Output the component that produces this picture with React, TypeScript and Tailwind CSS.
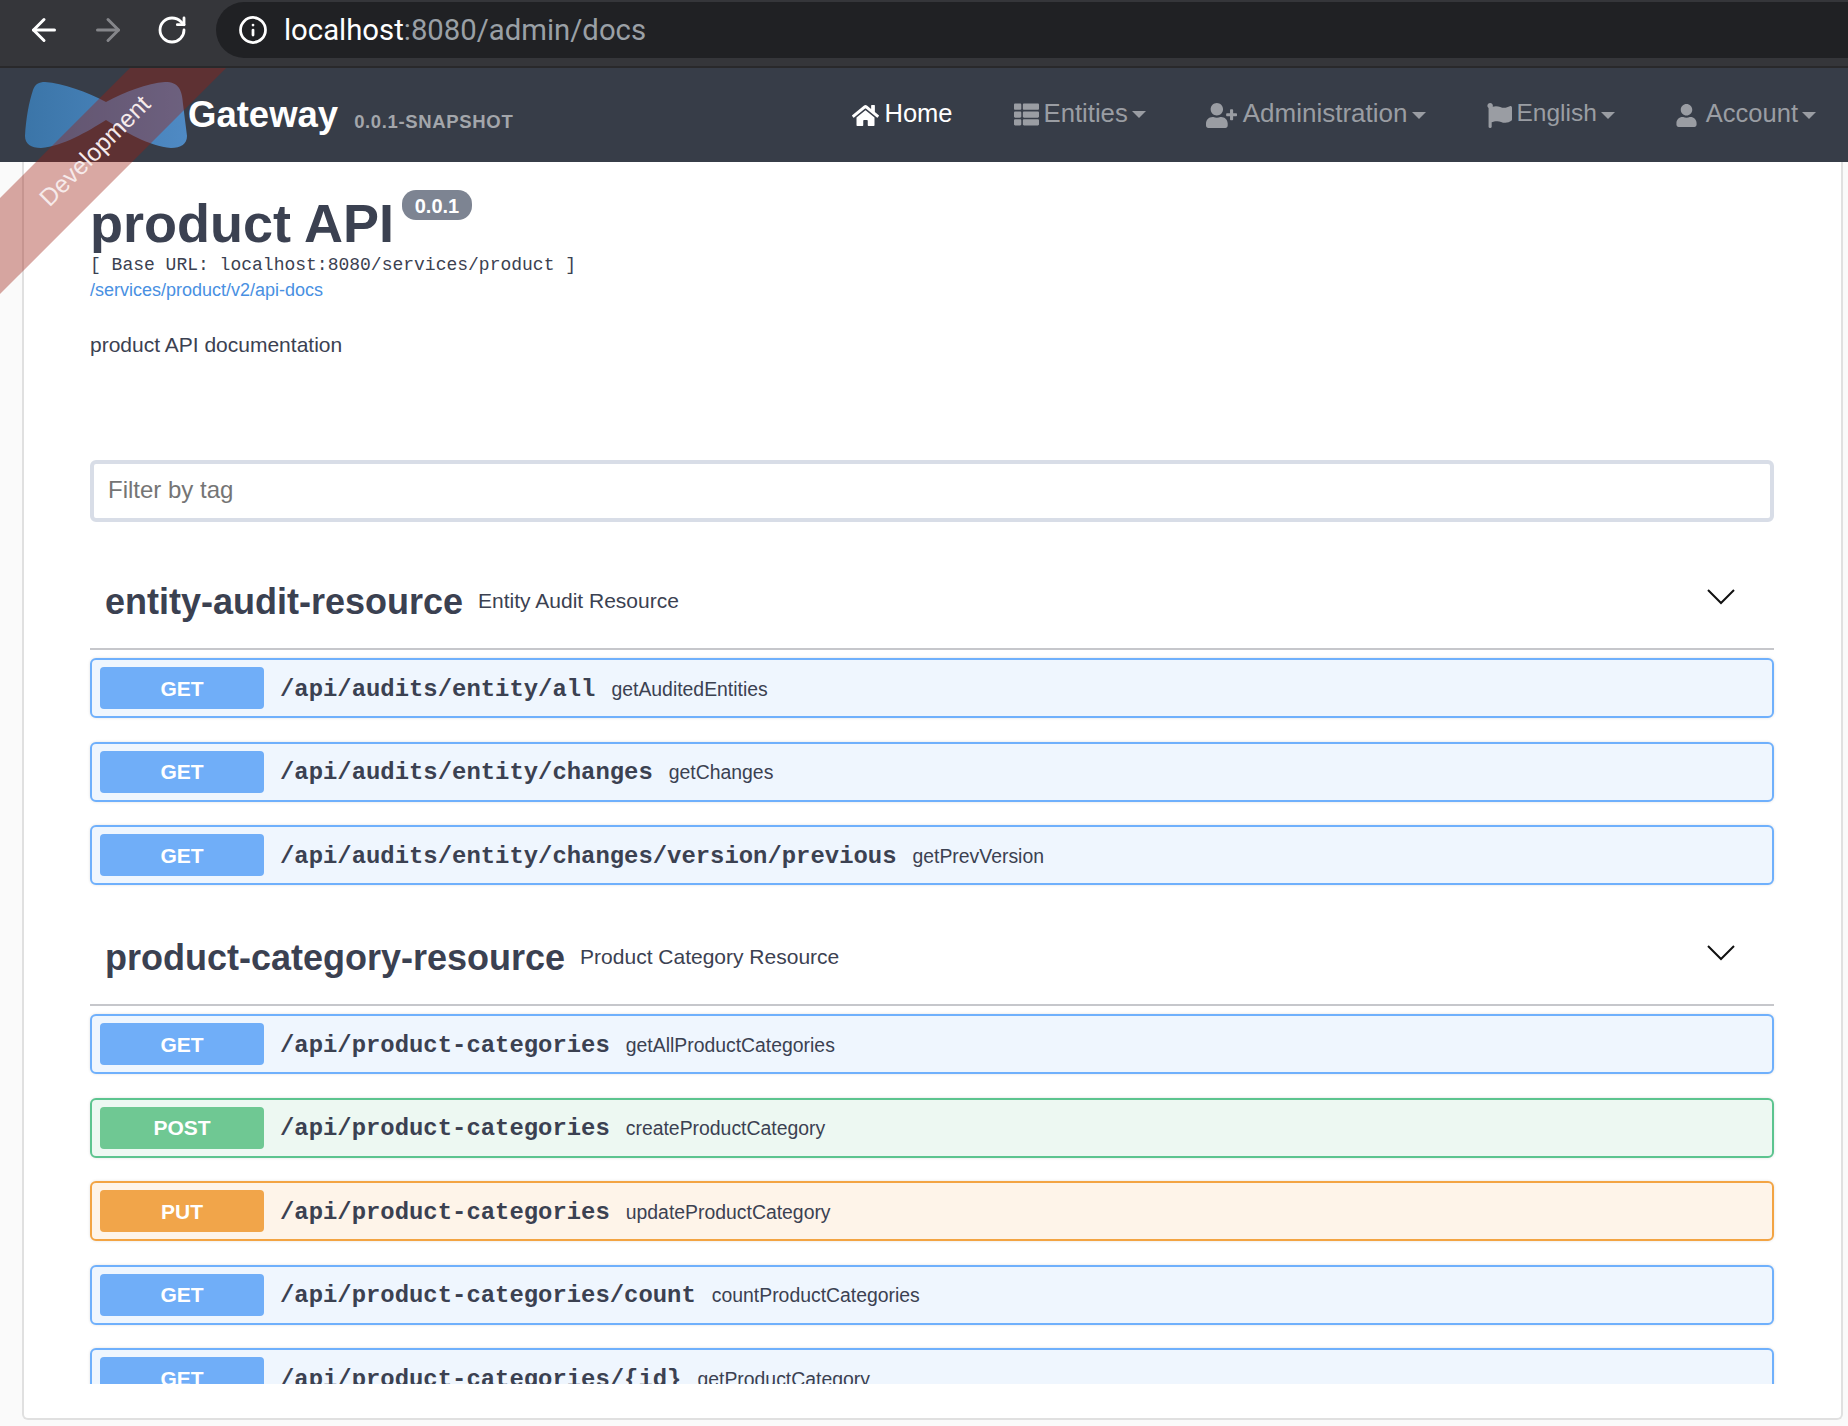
import React from 'react';
import { ArrowLeft, ArrowRight, RotateCw, Info } from 'lucide-react';
import { FaHome, FaThList, FaUserPlus, FaFlag, FaUser } from 'react-icons/fa';

type Method = 'GET' | 'POST' | 'PUT';

interface Op {
  method: Method;
  path: string;
  summary: string;
}

const entityOps: Op[] = [
  { method: 'GET', path: '/api/audits/entity/all', summary: 'getAuditedEntities' },
  { method: 'GET', path: '/api/audits/entity/changes', summary: 'getChanges' },
  { method: 'GET', path: '/api/audits/entity/changes/version/previous', summary: 'getPrevVersion' },
];

const categoryOps: Op[] = [
  { method: 'GET', path: '/api/product-categories', summary: 'getAllProductCategories' },
  { method: 'POST', path: '/api/product-categories', summary: 'createProductCategory' },
  { method: 'PUT', path: '/api/product-categories', summary: 'updateProductCategory' },
  { method: 'GET', path: '/api/product-categories/count', summary: 'countProductCategories' },
  { method: 'GET', path: '/api/product-categories/{id}', summary: 'getProductCategory' },
];

const opStyles: Record<Method, { box: string; badge: string }> = {
  GET: { box: 'border-[#6fb0fc] bg-[#eff6fe]', badge: 'bg-[#70aef8]' },
  POST: { box: 'border-[#5cc48f] bg-[#edf8f2]', badge: 'bg-[#6fc893]' },
  PUT: { box: 'border-[#f3a443] bg-[#fef4e9]', badge: 'bg-[#f1a54a]' },
};

function OpRow({ op }: { op: Op }) {
  const s = opStyles[op.method];
  return (
    <div className={`flex h-[60px] shrink-0 items-center rounded-[6px] border-2 pl-[8px] shadow-[0_0_3px_rgba(0,0,0,0.12)] ${s.box}`}>
      <div className={`flex h-[42px] w-[164px] items-center justify-center rounded-[4px] pt-[1px] text-[21px] font-bold text-white ${s.badge}`}>
        {op.method}
      </div>
      <span className="ml-[16px] mt-[3px] font-['Liberation_Mono',monospace] text-[23.9px] font-bold text-[#3b4151]">{op.path}</span>
      <span className="ml-[16px] mt-[3px] text-[19.4px] text-[#3b4151]">{op.summary}</span>
    </div>
  );
}

function TagSection({ name, desc, ops, topGap }: { name: string; desc: string; ops: Op[]; topGap: string }) {
  return (
    <section className={topGap}>
      <div className="flex h-[96px] items-center border-b-2 border-[#c6c7cb] pl-[15px] pr-[39px]">
        <h3 className="mt-[2px] text-[36px] font-bold text-[#3b4151]">{name}</h3>
        <span className="ml-[15px] text-[21px] text-[#3b4151]">{desc}</span>
        <svg className="ml-auto -mt-[8px]" width="28" height="16" viewBox="0 0 28 16" fill="none" stroke="#111" strokeWidth="2">
          <polyline points="1,1 14,14 27,1" />
        </svg>
      </div>
      <div className="mt-[8px] flex flex-col gap-[23.5px]">
        {ops.map((op, i) => (
          <OpRow key={i} op={op} />
        ))}
      </div>
    </section>
  );
}

function NavItem({ icon, label, text, active, caret = true }: { icon: React.ReactNode; label: string; text: string; active?: boolean; caret?: boolean }) {
  return (
    <div className={`flex items-center ${active ? 'text-white' : 'text-[#9a9da3]'}`}>
      {icon}
      <span className={`-mt-[3px] ${text}`}>{label}</span>
      {caret && <span className="ml-[4px] h-0 w-0 border-x-[7px] border-t-[7px] border-x-transparent border-t-[#9a9da3]" />}
    </div>
  );
}

export default function App() {
  return (
    <div className="relative flex h-[1426px] w-[1848px] flex-col overflow-hidden bg-[#fafafa] font-['Liberation_Sans',sans-serif]">
      {/* barra do navegador */}
      <div className="flex h-[68px] shrink-0 border-b-2 border-[#29292b] bg-[#35363a]">
        <div className="flex h-[66px] w-[216px] items-center pb-[6px] pl-[26px]">
          <ArrowLeft size={36} strokeWidth={2} className="text-white" />
          <ArrowRight size={36} strokeWidth={2} className="ml-[28px] text-[#85868a]" />
          <RotateCw size={32} strokeWidth={2.1} className="ml-[30px] text-white" />
        </div>
        <div className="mt-[2px] flex h-[56px] flex-1 items-center rounded-l-[28px] bg-[#202124] pl-[22px]">
          <Info size={30} strokeWidth={2.2} className="text-white" />
          <span className="ml-[16px] mt-[2px] font-['Roboto',sans-serif] text-[29.3px] text-white">
            localhost<span className="text-[#9aa0a6]">:8080/admin/docs</span>
          </span>
        </div>
      </div>

      {/* navbar */}
      <div className="flex h-[94px] shrink-0 items-center bg-[#373d48] pl-[25px]">
        <svg width="162" height="66" viewBox="0 0 162 66">
          <defs>
            <linearGradient id="bow" x1="0" y1="0" x2="1" y2="0">
              <stop offset="0" stopColor="#3b75a8" />
              <stop offset="1" stopColor="#4f8ac4" />
            </linearGradient>
          </defs>
          <path
            d="M20 0 C38 1 62 10 81 20 C100 10 122 1 140 0 C154 0 157 8 158 22 L162 54 C162 62 156 66 146 66 C124 64 100 50 81 38 C62 50 38 64 16 66 C6 66 0 62 0 54 C1 36 4 20 8 8 C10 2 14 0 20 0 Z"
            fill="url(#bow)"
          />
        </svg>
        <span className="ml-[1px] mt-[1px] text-[36.5px] font-bold text-white">Gateway</span>
        <span className="ml-[16px] mt-[14px] text-[18.5px] font-bold tracking-[0.65px] text-[#a3a6ab]">0.0.1-SNAPSHOT</span>
        <div className="ml-auto flex items-center pr-[32px]">
          <NavItem active caret={false} text="ml-[5px] text-[25.5px]" icon={<FaHome size={27} />} label="Home" />
          <div className="ml-[61px]">
            <NavItem text="ml-[5px] text-[25.7px]" icon={<FaThList size={25} />} label="Entities" />
          </div>
          <div className="ml-[60px]">
            <NavItem text="ml-[6px] text-[26px]" icon={<FaUserPlus size={31} />} label="Administration" />
          </div>
          <div className="ml-[61px]">
            <NavItem text="ml-[5px] text-[24.5px]" icon={<FaFlag size={25} />} label="English" />
          </div>
          <div className="ml-[60px]">
            <NavItem text="ml-[8px] text-[25.5px]" icon={<FaUser size={23} />} label="Account" />
          </div>
        </div>
      </div>

      {/* cartão principal */}
      <div className="ml-[22px] h-[1258px] w-[1821px] shrink-0 rounded-b-[6px] border-x-2 border-b-2 border-[#e0e0e0] bg-white">
        <div className="h-[1222px] overflow-hidden pl-[66px] pr-[67px] text-[#3b4151]">
          <div className="flex pt-[31px]">
            <h2 className="text-[54px] font-bold leading-[60px]">product API</h2>
            <span className="ml-[8px] -mt-[3px] flex h-[30px] w-[70px] items-center justify-center rounded-[14px] bg-[#7d8492] pt-[2px] text-[20px] font-bold text-white">
              0.0.1
            </span>
          </div>
          <p className="mt-[1px] font-['Liberation_Mono',monospace] text-[18px] leading-[22px]">[ Base URL: localhost:8080/services/product ]</p>
          <p className="mt-[3px] text-[18px] leading-[22px] text-[#4990e2]">/services/product/v2/api-docs</p>
          <p className="mt-[32px] text-[21px] leading-[24px]">product API documentation</p>

          <div className="mt-[103px] flex h-[62px] items-center rounded-[6px] border-4 border-[#d8dde7] pb-[2px] pl-[14px] text-[24px] text-[#757575]">
            Filter by tag
          </div>

          <TagSection topGap="mt-[32px]" name="entity-audit-resource" desc="Entity Audit Resource" ops={entityOps} />
          <TagSection topGap="mt-[25px]" name="product-category-resource" desc="Product Category Resource" ops={categoryOps} />
        </div>
      </div>

      {/* fita de ambiente sobre a navbar */}
      <div className="pointer-events-none absolute left-0 top-[68px] h-[300px] w-[300px] overflow-hidden">
        <div className="absolute left-[-111.5px] top-[54.5px] flex h-[68px] w-[400px] -rotate-45 items-center justify-center bg-[rgba(157,32,19,0.39)] pl-[17px] text-[24.5px] text-[#f6eaea]">
          Development
        </div>
      </div>
    </div>
  );
}
